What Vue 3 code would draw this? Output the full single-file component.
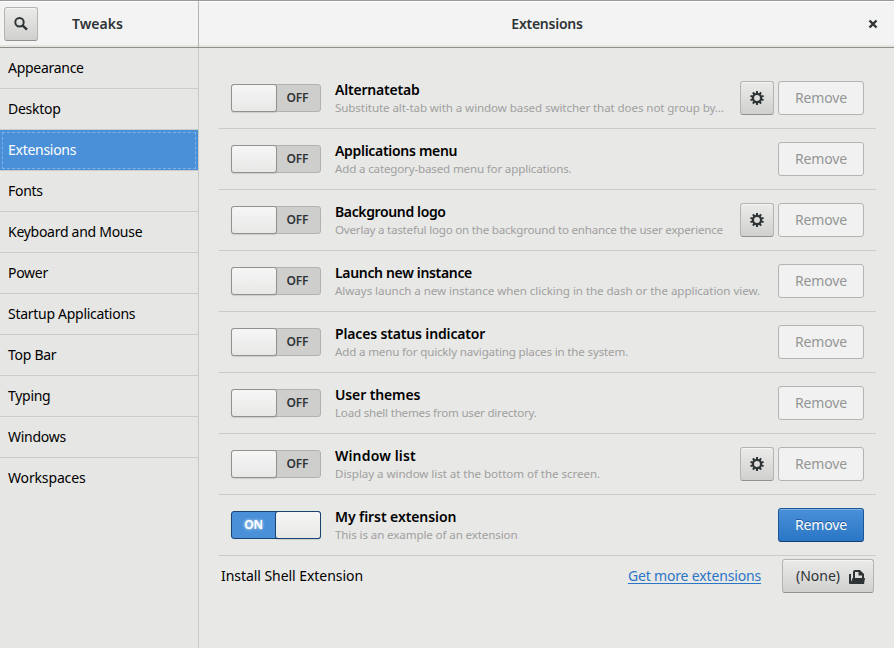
<script setup>
const sections = [
  'Appearance', 'Desktop', 'Extensions', 'Fonts', 'Keyboard and Mouse', 'Power',
  'Startup Applications', 'Top Bar', 'Typing', 'Windows', 'Workspaces',
]
// nameTrack and textTrack are the letter spacing of each line, in px
const extensions = [
  { name: 'Alternatetab', text: 'Substitute alt-tab with a window based switcher that does not group by…', gear: true, nameTrack: -0.2, textTrack: -0.1 },
  { name: 'Applications menu', text: 'Add a category-based menu for applications.', nameTrack: -0.3, textTrack: -0.17 },
  { name: 'Background logo', text: 'Overlay a tasteful logo on the background to enhance the user experience', gear: true, nameTrack: -0.37, textTrack: -0.22 },
  { name: 'Launch new instance', text: 'Always launch a new instance when clicking in the dash or the application view.', nameTrack: -0.33, textTrack: -0.06 },
  { name: 'Places status indicator', text: 'Add a menu for quickly navigating places in the system.', nameTrack: -0.15, textTrack: -0.17 },
  { name: 'User themes', text: 'Load shell themes from user directory.', nameTrack: -0.12, textTrack: -0.21 },
  { name: 'Window list', text: 'Display a window list at the bottom of the screen.', gear: true, nameTrack: 0.16, textTrack: -0.06 },
  { name: 'My first extension', text: 'This is an example of an extension', on: true, nameTrack: -0.08, textTrack: -0.12 },
]
</script>

<template>
  <div class="window">
    <header class="bar">
      <div class="bar-left">
        <button class="btn square" aria-label="Search">
          <svg width="16" height="16" viewBox="0 0 16 16"><circle cx="6.5" cy="6.2" r="4.2" fill="none" stroke="#2e3436" stroke-width="2" /><path d="M9.5 9.3 14 13.6" stroke="#2e3436" stroke-width="2.4" /></svg>
        </button>
        <h1 class="heading tweaks">Tweaks</h1>
      </div>
      <div class="bar-right">
        <h1 class="heading">Extensions</h1>
        <svg class="close" width="10" height="10" viewBox="0 0 10 10"><path d="M1.5 1.5 8.5 8.5M8.5 1.5 1.5 8.5" stroke="#2e3436" stroke-width="2.4" /></svg>
      </div>
    </header>
    <div class="body">
      <nav class="side">
        <div v-for="s in sections" :key="s" class="item" :class="{ selected: s === 'Extensions' }">{{ s }}</div>
      </nav>
      <main class="main">
        <div v-for="e in extensions" :key="e.name" class="row">
          <div class="switch" :class="{ on: e.on }">
            <span class="knob"></span><span class="state">{{ e.on ? 'ON' : 'OFF' }}</span>
          </div>
          <div class="info">
            <div class="name" :style="{ letterSpacing: e.nameTrack + 'px' }">{{ e.name }}</div>
            <div class="text" :style="{ letterSpacing: e.textTrack + 'px' }">{{ e.text }}</div>
          </div>
          <button v-if="e.gear" class="btn square" aria-label="Settings">
            <svg width="16" height="16" viewBox="0 0 16 16"><circle cx="8" cy="8" r="4.1" fill="none" stroke="#2e3436" stroke-width="2.3" /><path v-for="n in 10" :key="n" d="M8 1.1V3.6" stroke="#2e3436" stroke-width="2" :transform="`rotate(${(n - 1) * 36} 8 8)`" /></svg>
          </button>
          <button class="btn remove" :class="e.on ? 'active' : 'disabled'">Remove</button>
        </div>
        <div class="install">
          <span class="label">Install Shell Extension</span>
          <a class="link">Get more extensions</a>
          <button class="btn file"><span>(None)</span>
            <svg class="folder" width="16" height="16" viewBox="0 0 16 16"><path d="M5 9V3q0-1 1-1h4.5L14 5.5V9" fill="none" stroke="#2e3436" stroke-width="2" /><path d="M9.5 1 15 6.5H9.5zM0 5h2v8l1.6-4H16l-1 6H1q-1 0-1-1z" fill="#2e3436" /></svg>
          </button>
        </div>
      </main>
    </div>
  </div>
</template>

<style>
body { background: #e8e8e7; overflow: hidden; }
</style>

<style scoped>
* { box-sizing: border-box; }
.window { width: 894px; height: 648px; display: flex; flex-direction: column; background: #e8e8e7; font: 14px/20px "Noto Sans", sans-serif; color: #000; }
.bar { height: 48px; display: flex; flex: none; background: #f3f3f3; border-top: 1px solid #999; border-bottom: 1px solid #8f8f8c; box-shadow: inset 0 1px #fff, inset 0 -2px #e4e4e0; }
.bar-left { width: 199px; display: flex; align-items: center; padding: 0 0 0 4px; border-right: 1px solid #b4b4b1; }
.bar-right { flex: 1; display: grid; grid-template-columns: 1fr auto 1fr; align-items: center; padding: 0 16px 0 17px; }
.bar-right .heading { grid-column: 2; }
.close { justify-self: end; }
.heading { margin: 0; font-size: 14px; line-height: 20px; font-weight: 600; color: #2e3436; letter-spacing: -0.25px; }
.tweaks { margin-left: 34px; letter-spacing: 0; }
.body { flex: 1; display: flex; min-height: 0; }
.side { width: 199px; flex: none; border-right: 1px solid #c8c8c6; background: #e6e6e4; }
.item { height: 41px; padding: 10px 8px; border-bottom: 1px solid #cbcbc9; letter-spacing: -0.28px; }
.item:last-child { border: 0; letter-spacing: -0.15px; }
.selected { background: #4a90d9; background-clip: padding-box; color: #fff; outline: 1px dashed #80b1e4; outline-offset: -3px; }
.main { flex: 1; min-width: 0; padding: 20px 18px 0 20px; }
.row { height: 61px; border-bottom: 1px solid #cbcbc9; padding: 0 12px; display: flex; align-items: center; gap: 4px; }
.switch { width: 90px; height: 28px; flex: none; display: flex; border: 1px solid #b2b2af; border-radius: 3px; background: #cececd; }
.knob { width: 46px; height: 28px; margin: -1px 0 0 -1px; flex: none; border: 1px solid #91918e; border-radius: 3px; background: linear-gradient(#f6f6f6, #e8e8e7); box-shadow: 0 1px 1px rgba(0,0,0,.12); }
.state { width: 41px; text-align: center; font-size: 12px; line-height: 26px; font-weight: 600; color: #2e3436; letter-spacing: -0.2px; }
.on { flex-direction: row-reverse; background: #4a90d9; border-color: #184472; }
.on .knob { margin: -1px -1px 0 0; border-color: #184472; }
.on .state { width: 44px; color: #fff; text-shadow: 0 0 3px #fff; }
.info { flex: 1; min-width: 0; padding: 1px 0 0 10px; white-space: nowrap; }
.name { font-size: 14px; line-height: 18px; font-weight: 600; }
.text { font-size: 11.6px; line-height: 17px; color: #a0a09e; }
.btn { height: 34px; padding: 0; flex: none; display: flex; align-items: center; justify-content: center; border: 1px solid #b4b4b1; border-bottom-color: #91918e; border-radius: 3px; background: linear-gradient(#ebebea, #d0d0ce); box-shadow: inset 0 1px #f5f5f4; font: inherit; color: #2e3436; }
.square { width: 34px; }
.remove { width: 86px; letter-spacing: -0.15px; }
.disabled { background: #f1f1f1; border-color: #b4b4b1; box-shadow: none; color: #949695; }
.active { color: #fff; border-color: #1c5697; border-bottom-color: #15406f; background: linear-gradient(#4a90d9, #2a76c6); box-shadow: inset 0 1px #81b2e5; text-shadow: 0 -1px #1c5697; }
.install { display: flex; align-items: center; padding: 3px 2px 0; }
.label { flex: 1; letter-spacing: -0.05px; }
.link { color: #2a76c6; margin-right: 21px; letter-spacing: -0.16px; text-decoration: underline; text-underline-offset: 2px; text-decoration-thickness: 1px; }
.file { width: 92px; gap: 9px; padding-left: 5px; }
.folder { margin-top: 2px; }
</style>
